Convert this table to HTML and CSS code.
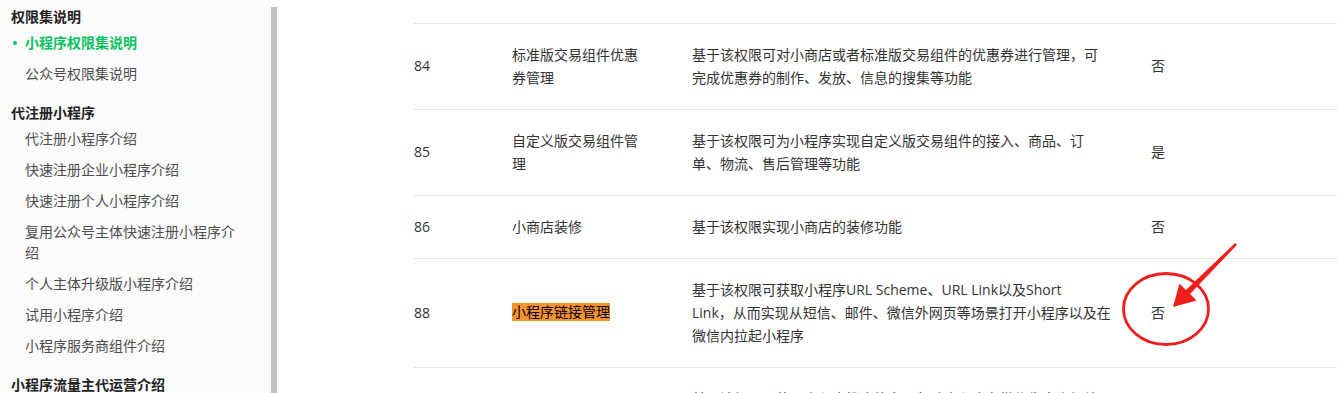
FILE: index.html
```html
<!DOCTYPE html>
<html lang="zh-CN">
<head>
<meta charset="utf-8">
<title>小程序权限集说明</title>
<link rel="stylesheet" href="styles.css">
</head>
<body>
<div class="page">
  <aside class="sidebar">
    <nav class="nav">
      <div class="group">
        <div class="group-title">权限集说明</div>
        <a class="item active">小程序权限集说明</a>
        <a class="item">公众号权限集说明</a>
      </div>
      <div class="group">
        <div class="group-title">代注册小程序</div>
        <a class="item">代注册小程序介绍</a>
        <a class="item">快速注册企业小程序介绍</a>
        <a class="item">快速注册个人小程序介绍</a>
        <a class="item">复用公众号主体快速注册小程序介绍</a>
        <a class="item">个人主体升级版小程序介绍</a>
        <a class="item">试用小程序介绍</a>
        <a class="item">小程序服务商组件介绍</a>
      </div>
      <div class="group">
        <div class="group-title">小程序流量主代运营介绍</div>
        <a class="item">小程序流量主代运营介绍</a>
      </div>
    </nav>
  </aside>
  <div class="scrollbar"><div class="thumb"></div></div>
  <main class="main">
    <table class="perm">
      <colgroup>
        <col class="c-id">
        <col class="c-name">
        <col class="c-desc">
        <col class="c-flag">
      </colgroup>
      <tbody>
        <tr class="tail"><td></td><td></td><td></td><td></td></tr>
        <tr>
          <td>84</td>
          <td class="name">标准版交易组件优惠券管理</td>
          <td class="desc">基于该权限可对小商店或者标准版交易组件的优惠券进行管理，可完成优惠券的制作、发放、信息的搜集等功能</td>
          <td>否</td>
        </tr>
        <tr>
          <td>85</td>
          <td class="name">自定义版交易组件管理</td>
          <td class="desc">基于该权限可为小程序实现自定义版交易组件的接入、商品、订单、物流、售后管理等功能</td>
          <td>是</td>
        </tr>
        <tr>
          <td>86</td>
          <td class="name">小商店装修</td>
          <td class="desc">基于该权限实现小商店的装修功能</td>
          <td>否</td>
        </tr>
        <tr>
          <td>88</td>
          <td class="name"><span class="mark">小程序链接管理</span></td>
          <td class="desc">基于该权限可获取小程序URL Scheme、URL Link以及Short<br>Link，从而实现从短信、邮件、微信外网页等场景打开小程序以及在微信内拉起小程序</td>
          <td>否</td>
        </tr>
        <tr>
          <td>89</td>
          <td class="name">小程序广告推广管理</td>
          <td class="desc">基于该权限可使用小程序推广能力，帮助小程序在微信生态内投放广告并进行推广效果的数据分析与管理，并可获取广告推广的相关数据</td>
          <td>否</td>
        </tr>
      </tbody>
    </table>
  </main>
  <svg class="annot" width="1337" height="393" viewBox="0 0 1337 393" aria-hidden="true">
    <ellipse cx="1166" cy="309" rx="42.5" ry="35.5" fill="none" stroke="#f01d1d" stroke-width="2.8"/>
    <polygon fill="#f01d1d" points="1235.1,243.1 1185.9,289.9 1179.5,283.5 1173,307 1196.5,300.5 1190.1,294.1 1236.9,244.9"/>
  </svg>
</div>
</body>
</html>
```

FILE: styles.css
```css
* {
  box-sizing: border-box;
}

html, body {
  margin: 0;
  padding: 0;
  background: #ffffff;
}

body {
  font-family: "Open Sans", "Noto Sans CJK SC", sans-serif;
  font-size: 14px;
  color: #333333;
  overflow: hidden;
}

.page {
  position: relative;
  display: flex;
  width: 1337px;
  height: 393px;
  overflow: hidden;
}

/* ---------- sidebar ---------- */
.sidebar {
  flex: 0 0 271px;
  width: 271px;
  background: #fbfbfb;
  padding: 6px 0 0 11px;
}

.nav {
  display: flex;
  flex-direction: column;
  gap: 13px;
}

.group {
  display: flex;
  flex-direction: column;
}

.group-title {
  font-family: "Noto Sans CJK SC", sans-serif;
  line-height: 21px;
  font-weight: 600;
  color: #222222;
}

.item {
  position: relative;
  display: block;
  padding: 5px 30px 5px 14px;
  line-height: 21px;
  color: #4d4d4d;
  font-family: "Noto Sans CJK SC", sans-serif;
  text-decoration: none;
}

.item.active {
  color: #07c160;
  font-weight: 700;
}

.item.active::before {
  content: "";
  position: absolute;
  left: 2px;
  top: 14px;
  width: 4px;
  height: 4px;
  border-radius: 50%;
  background: #07c160;
}

.scrollbar {
  flex: 0 0 6px;
  padding-top: 7px;
}

.thumb {
  width: 6px;
  height: 100%;
  background: #c1c1c1;
}

/* ---------- main table ---------- */
.main {
  flex: 1 1 auto;
  padding-left: 137px;
}

.perm {
  width: 923px;
  border-collapse: collapse;
  table-layout: fixed;
}

.c-id { width: 98px; }
.c-name { width: 180px; }
.c-desc { width: 459px; }
.c-flag { width: 186px; }

.perm td {
  padding: 19px 0 20px 0;
  line-height: 23px;
  vertical-align: middle;
  border-bottom: 1px solid #e5e5e5;
  color: #333333;
}

.perm td.name {
  padding-right: 50px;
}

.perm td.desc {
  padding-right: 40px;
}

.perm tr.tail td {
  height: 23px;
  padding: 0;
}

.mark {
  display: inline-block;
  line-height: 18px;
  background: #fb9230;
  color: #000000;
  vertical-align: 1px;
}

/* ---------- annotation overlay ---------- */
.annot {
  position: absolute;
  left: 0;
  top: 0;
  pointer-events: none;
}
```
